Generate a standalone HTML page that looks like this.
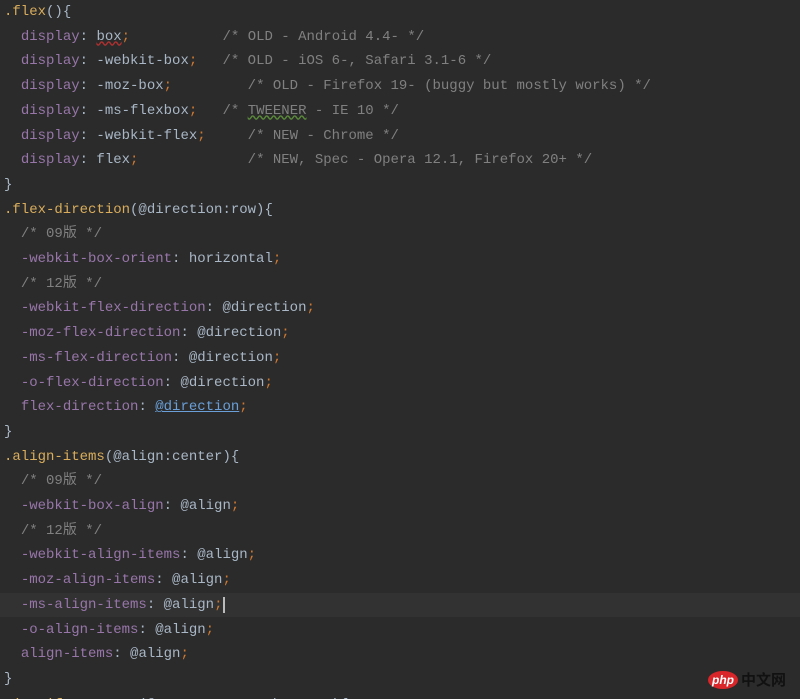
<!DOCTYPE html>
<html><head><meta charset="utf-8"><style>
html,body{margin:0;width:800px;height:699px;overflow:hidden}
body{background:#2b2b2b;position:relative;font-family:"Liberation Mono","Noto Sans CJK SC",monospace;font-size:14px;color:#a9b7c6}
.l{position:absolute;left:4px;height:24.7px;line-height:24.7px;white-space:pre;width:796px}
.s{color:#d9ad5c}.p{color:#9876aa}.k{color:#cc7832}.c{color:#808080}
.u{text-decoration:underline;color:#6a9fd8}
.sq{text-decoration:underline wavy #b03030}.gq{text-decoration:underline wavy #5a8a3a}
.cur{background:#323232;left:0;padding-left:4px}
</style></head><body>
<div class="l" style="top:0"><span class="s">.flex</span>(){</div>
<div class="l" style="top:24.7px">  <span class="p">display</span>: <span class="sq">box</span><span class="k">;</span>           <span class="c">/* OLD - Android 4.4- */</span></div>
<div class="l" style="top:49.4px">  <span class="p">display</span>: -webkit-box<span class="k">;</span>   <span class="c">/* OLD - iOS 6-, Safari 3.1-6 */</span></div>
<div class="l" style="top:74.1px">  <span class="p">display</span>: -moz-box<span class="k">;</span>         <span class="c">/* OLD - Firefox 19- (buggy but mostly works) */</span></div>
<div class="l" style="top:98.8px">  <span class="p">display</span>: -ms-flexbox<span class="k">;</span>   <span class="c">/* <span class="gq">TWEENER</span> - IE 10 */</span></div>
<div class="l" style="top:123.5px">  <span class="p">display</span>: -webkit-flex<span class="k">;</span>     <span class="c">/* NEW - Chrome */</span></div>
<div class="l" style="top:148.2px">  <span class="p">display</span>: flex<span class="k">;</span>             <span class="c">/* NEW, Spec - Opera 12.1, Firefox 20+ */</span></div>
<div class="l" style="top:172.9px">}</div>
<div class="l" style="top:197.6px"><span class="s">.flex-direction</span>(@direction:row){</div>
<div class="l" style="top:222.3px">  <span class="c">/* 09版 */</span></div>
<div class="l" style="top:247px">  <span class="p">-webkit-box-orient</span>: horizontal<span class="k">;</span></div>
<div class="l" style="top:271.7px">  <span class="c">/* 12版 */</span></div>
<div class="l" style="top:296.4px">  <span class="p">-webkit-flex-direction</span>: @direction<span class="k">;</span></div>
<div class="l" style="top:321.1px">  <span class="p">-moz-flex-direction</span>: @direction<span class="k">;</span></div>
<div class="l" style="top:345.8px">  <span class="p">-ms-flex-direction</span>: @direction<span class="k">;</span></div>
<div class="l" style="top:370.5px">  <span class="p">-o-flex-direction</span>: @direction<span class="k">;</span></div>
<div class="l" style="top:395.2px">  <span class="p">flex-direction</span>: <span class="u">@direction</span><span class="k">;</span></div>
<div class="l" style="top:419.9px">}</div>
<div class="l" style="top:444.6px"><span class="s">.align-items</span>(@align:center){</div>
<div class="l" style="top:469.3px">  <span class="c">/* 09版 */</span></div>
<div class="l" style="top:494px">  <span class="p">-webkit-box-align</span>: @align<span class="k">;</span></div>
<div class="l" style="top:518.7px">  <span class="c">/* 12版 */</span></div>
<div class="l" style="top:543.4px">  <span class="p">-webkit-align-items</span>: @align<span class="k">;</span></div>
<div class="l" style="top:568.1px">  <span class="p">-moz-align-items</span>: @align<span class="k">;</span></div>
<div class="l cur" style="top:592.8px">  <span class="p">-ms-align-items</span>: @align<span class="k">;</span><span style="border-left:2px solid #bbb;margin-left:1px"></span></div>
<div class="l" style="top:617.5px">  <span class="p">-o-align-items</span>: @align<span class="k">;</span></div>
<div class="l" style="top:642.2px">  <span class="p">align-items</span>: @align<span class="k">;</span></div>
<div class="l" style="top:666.9px">}</div>
<div class="l" style="top:693px"><span class="s">.justify-content</span>(@content:space-between){</div>
<div style="position:absolute;left:708px;top:671px;width:30px;height:18px;border-radius:50%;background:#d8262a;color:#fff;font:italic bold 12px 'Liberation Sans',sans-serif;text-align:center;line-height:18px">php</div>
<div style="position:absolute;left:741px;top:670px;font:bold 15px 'Noto Sans CJK SC',sans-serif;color:#111;line-height:20px">中文网</div>
</body></html>
